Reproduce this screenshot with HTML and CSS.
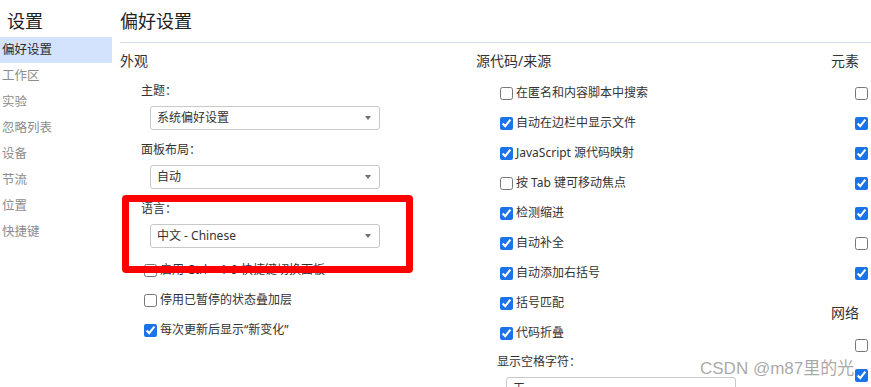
FILE: index.html
```html
<!DOCTYPE html>
<html lang="zh-CN">
<head>
<meta charset="utf-8">
<title>设置</title>
<link rel="stylesheet" href="styles.css">
</head>
<body>
<div class="app">
  <nav class="sidebar">
    <div class="side-title">设置</div>
    <ul class="side-list">
      <li class="side-item active">偏好设置</li>
      <li class="side-item">工作区</li>
      <li class="side-item">实验</li>
      <li class="side-item">忽略列表</li>
      <li class="side-item">设备</li>
      <li class="side-item">节流</li>
      <li class="side-item">位置</li>
      <li class="side-item">快捷键</li>
    </ul>
  </nav>
  <main class="main">
    <header class="main-header">偏好设置</header>
    <div class="columns">
      <section class="col">
        <h2 class="sec-title">外观</h2>
        <div class="field">
          <div class="field-label">主题：</div>
          <div class="select"><span class="select-text">系统偏好设置</span><span class="arrow"></span></div>
        </div>
        <div class="field">
          <div class="field-label">面板布局：</div>
          <div class="select"><span class="select-text">自动</span><span class="arrow"></span></div>
        </div>
        <div class="field">
          <div class="field-label">语言：</div>
          <div class="select"><span class="select-text">中文 - Chinese</span><span class="arrow"></span></div>
        </div>
        <div class="checks first-after-select">
          <label class="check"><input type="checkbox"><span>启用 Ctrl + 1-9 快捷键切换面板</span></label>
          <label class="check"><input type="checkbox"><span>停用已暂停的状态叠加层</span></label>
          <label class="check"><input type="checkbox" checked><span>每次更新后显示“新变化”</span></label>
        </div>
      </section>
      <section class="col col-mid">
        <h2 class="sec-title">源代码/来源</h2>
        <div class="checks">
          <label class="check"><input type="checkbox"><span>在匿名和内容脚本中搜索</span></label>
          <label class="check"><input type="checkbox" checked><span>自动在边栏中显示文件</span></label>
          <label class="check"><input type="checkbox" checked><span>JavaScript 源代码映射</span></label>
          <label class="check"><input type="checkbox"><span>按 Tab 键可移动焦点</span></label>
          <label class="check"><input type="checkbox" checked><span>检测缩进</span></label>
          <label class="check"><input type="checkbox" checked><span>自动补全</span></label>
          <label class="check"><input type="checkbox" checked><span>自动添加右括号</span></label>
          <label class="check"><input type="checkbox" checked><span>括号匹配</span></label>
          <label class="check"><input type="checkbox" checked><span>代码折叠</span></label>
        </div>
        <div class="field field-tight">
          <div class="field-label">显示空格字符：</div>
          <div class="select"><span class="select-text">无</span><span class="arrow"></span></div>
        </div>
      </section>
      <section class="col col-last">
        <h2 class="sec-title">元素</h2>
        <div class="checks">
          <label class="check"><input type="checkbox"><span>显示用户代理 Shadow DOM</span></label>
          <label class="check"><input type="checkbox" checked><span>自动换行</span></label>
          <label class="check"><input type="checkbox" checked><span>显示 HTML 注释</span></label>
          <label class="check"><input type="checkbox" checked><span>在鼠标悬停时显示 DOM 节点</span></label>
          <label class="check"><input type="checkbox" checked><span>显示详细的检查提示</span></label>
          <label class="check"><input type="checkbox"><span>在 DOM 中显示广告</span></label>
          <label class="check"><input type="checkbox" checked><span>显示 CSS 文档提示</span></label>
        </div>
        <h2 class="sec-title sec-gap">网络</h2>
        <div class="checks">
          <label class="check"><input type="checkbox"><span>保留日志</span></label>
          <label class="check"><input type="checkbox" checked><span>记录网络日志</span></label>
        </div>
      </section>
    </div>
  </main>
</div>
<div class="highlight-box"></div>
<div class="watermark">CSDN @m87里的光</div>
</body>
</html>
```

FILE: styles.css
```css
html, body {
  margin: 0;
  padding: 0;
  overflow: hidden;
  background: #ffffff;
}

body {
  font-family: "Noto Sans", "Noto Sans CJK SC", sans-serif;
  font-size: 12px;
  color: #333333;
  width: 871px;
  height: 387px;
  position: relative;
}

.app {
  display: flex;
  align-items: flex-start;
}

.sidebar {
  width: 112px;
  flex: none;
}

.side-title {
  height: 37px;
  padding-left: 7px;
  padding-top: 12px;
  font-size: 18px;
  line-height: 1;
  color: #222222;
  box-sizing: border-box;
}

.side-list {
  list-style: none;
  margin: 0;
  padding: 0;
}

.side-item {
  height: 26px;
  line-height: 26px;
  padding-left: 2px;
  font-size: 12.5px;
  color: #8c8c8c;
}

.side-item.active {
  background: #d3e3fd;
  color: #2b2b2b;
}

.main {
  flex: 1;
  min-width: 0;
  padding-left: 8px;
}

.main-header {
  height: 43px;
  box-sizing: border-box;
  padding-top: 12px;
  font-size: 18px;
  line-height: 1;
  color: #222222;
  border-bottom: 1px solid #d6deea;
}

.columns {
  display: flex;
  white-space: nowrap;
}

.col {
  width: 356px;
  flex: none;
}

.col-mid {
  width: 355px;
}

.col-last {
  width: 300px;
}

.sec-title {
  margin: 8px 0 0 0;
  height: 20px;
  line-height: 20px;
  font-size: 14px;
  font-weight: normal;
  color: #333333;
}

.sec-gap {
  margin-top: 15px;
}

.field {
  margin-top: 10px;
}

.field-label {
  height: 20px;
  line-height: 20px;
  padding-left: 21px;
  color: #333333;
}

.field-tight {
  margin-top: 4px;
}

.select {
  margin-top: 5px;
  margin-left: 30px;
  width: 230px;
  height: 24px;
  box-sizing: border-box;
  border: 1px solid #c8c8c8;
  border-radius: 3px;
  background: #ffffff;
  display: flex;
  align-items: center;
  justify-content: space-between;
  padding: 0 8px 0 6px;
}

.select-text {
  line-height: 20px;
  color: #333333;
}

.arrow {
  width: 0;
  height: 0;
  border-left: 3px solid transparent;
  border-right: 3px solid transparent;
  border-top: 4px solid #6e6e6e;
}

.checks {
  margin-top: 7px;
}

.first-after-select {
  margin-top: 7px;
}

.check {
  display: flex;
  align-items: center;
  height: 30px;
  padding-left: 20px;
  color: #333333;
}

.check input {
  width: 13px;
  height: 13px;
  margin: 0 3px 0 4px;
  accent-color: #1a73e8;
  flex: none;
}

.check span {
  line-height: 18px;
}

.highlight-box {
  position: absolute;
  left: 122px;
  top: 195px;
  width: 291px;
  height: 78px;
  box-sizing: border-box;
  border: 7px solid #ff0000;
  border-radius: 4px;
}

.watermark {
  position: absolute;
  left: 700px;
  top: 358px;
  font-family: "Liberation Sans", "Noto Sans CJK SC", sans-serif;
  font-size: 17px;
  line-height: 22px;
  color: rgba(140, 140, 140, 0.75);
  white-space: nowrap;
}
```
